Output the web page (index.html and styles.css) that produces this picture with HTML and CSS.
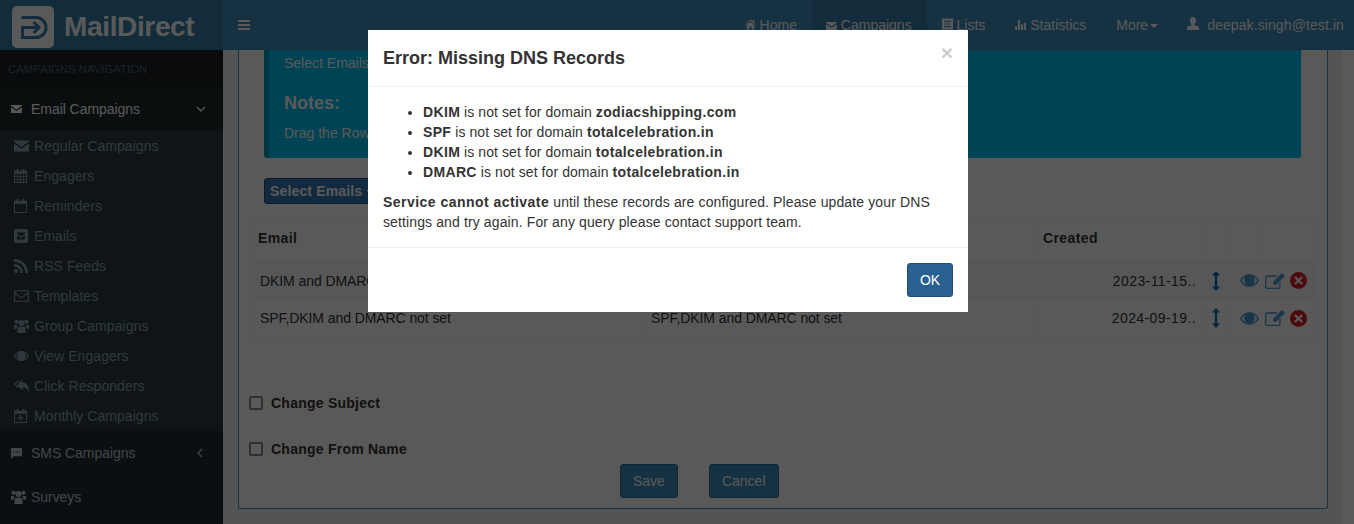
FILE: index.html
```html
<!DOCTYPE html>
<html lang="en">
<head>
  <meta charset="UTF-8">
  <title>MailDirect - Campaigns</title>
  <link rel="stylesheet" href="styles.css">
</head>
<body>

  <svg class="sprites" width="0" height="0">
    <symbol id="i-mail" viewBox="0 0 15 11" preserveAspectRatio="xMinYMid"><path d="M0 1.200V0h15v1.200L7.500 6.600zM0 3l7.500 5.300L15 3v8H0z"/></symbol>
    <symbol id="i-mail-o" viewBox="0 0 14 11" preserveAspectRatio="xMinYMid"><path fill="none" stroke="currentColor" stroke-width="1.100" d="M.6.6h12.800v9.800H.6zM.6 2.500 7 7l6.400-4.500"/></symbol>
    <symbol id="i-calendar" viewBox="0 0 14 15" preserveAspectRatio="xMinYMid"><path d="M3 0h2v2h4V0h2v2h3v13H0V2h3zM1 5v2.400h2.600V5zm3.400 0v2.400h2.200V5zm3 0v2.400h2.200V5zm3 0v2.400H13V5zM1 8.200v2.400h2.600V8.200zm3.400 0v2.400h2.200V8.200zm3 0v2.400h2.200V8.200zm3 0v2.400H13V8.200zM1 11.400V14h2.600v-2.600zm3.400 0V14h2.200v-2.600zm3 0V14h2.200v-2.600zm3 0V14H13v-2.600z" fill-rule="evenodd"/></symbol>
    <symbol id="i-calendar-o" viewBox="0 0 14 15" preserveAspectRatio="xMinYMid"><path d="M3 0h2v2h4V0h2v2h3v13H0V2h3zM1 5v9h12V5z" fill-rule="evenodd"/></symbol>
    <symbol id="i-calendar-plus" viewBox="0 0 14 15" preserveAspectRatio="xMinYMid"><path d="M3 0h2v2h4V0h2v2h3v13H0V2h3zM1 5v9h12V5zM6.400 6.500h1.200v2.400H10v1.200H7.600v2.400H6.400v-2.400H4V8.900h2.400z" fill-rule="evenodd"/></symbol>
    <symbol id="i-envelope-square" viewBox="0 0 12 12" preserveAspectRatio="xMinYMid"><path d="M2 0h8a2 2 0 0 1 2 2v8a2 2 0 0 1-2 2H2a2 2 0 0 1-2-2V2a2 2 0 0 1 2-2zm.5 3v1L6 6.300 9.500 4V3zm0 2.300V9h7V5.300L6 7.500z" fill-rule="evenodd"/></symbol>
    <symbol id="i-rss" viewBox="0 0 12 12" preserveAspectRatio="xMinYMid"><circle cx="1.700" cy="10.300" r="1.700"/><path d="M0 4.200v2.300A5.500 5.500 0 0 1 5.500 12h2.300A7.800 7.800 0 0 0 0 4.200zM0 0v2.300A9.700 9.700 0 0 1 9.700 12H12A12 12 0 0 0 0 0z"/></symbol>
    <symbol id="i-group" viewBox="0 0 15 14" preserveAspectRatio="xMinYMid"><circle cx="7.500" cy="3.900" r="3"/><circle cx="2.600" cy="2.800" r="2.100"/><circle cx="12.400" cy="2.800" r="2.100"/><path d="M4 7.800h7l.9 6.200H3.100zM0 9.800V6h3.300L2.700 9.800zM15 9.800V6h-3.300l.6 3.800z"/></symbol>
    <symbol id="i-eye" viewBox="0 0 18 12" preserveAspectRatio="xMinYMid"><path d="M9 0c4 0 7.300 2.500 9 6-1.700 3.500-5 6-9 6S1.700 9.500 0 6c1.700-3.500 5-6 9-6zM1.600 6C3.200 8.700 5.900 10.700 9 10.700s5.800-2 7.400-4.700c-.9-1.500-2.100-2.700-3.500-3.500a5 5 0 1 1-7.800 0C3.700 3.300 2.500 4.500 1.600 6z" fill-rule="evenodd"/></symbol>
    <symbol id="i-reply" viewBox="0 0 15 13" preserveAspectRatio="xMinYMid"><path d="M4.500 0v1.700L1.800 4.500l2.700 2.800V9L0 4.500zM8.500 0v3C12.500 3.300 15 6.500 15 13c-1.200-3.300-3-5-6.500-5v3.200L4 6.500 4 4.500z"/></symbol>
    <symbol id="i-comment" viewBox="0 0 12 12" preserveAspectRatio="xMinYMid"><path d="M1 0h10a1 1 0 0 1 1 1v7a1 1 0 0 1-1 1H3l-3 3V1a1 1 0 0 1 1-1zm1.500 3.800v1h1.400v-1zm2.800 0v1h1.400v-1zm2.800 0v1h1.400v-1z" fill-rule="evenodd"/></symbol>
    <symbol id="i-home" viewBox="0 0 14 13"><path d="M7 0l2.800 2.500V1h2v3.300L14 6.300l-.8.900L7 1.800.8 7.200 0 6.300zM2 7.600l5-4.400 5 4.400V13H8.500V9h-3v4H2z"/></symbol>
    <symbol id="i-list" viewBox="0 0 12 12"><path d="M0 0h12v12H0zm2 2.500v1.200h8V2.500zm0 2.900v1.200h8V5.400zm0 2.900v1.200h8V8.300z" fill-rule="evenodd"/></symbol>
    <symbol id="i-stats" viewBox="0 0 12 11"><path d="M0 7h2.300v4H0zM3.200 0h2.300v11H3.200zM6.500 5h2.300v6H6.500zM9.700 3H12v8H9.700z"/></symbol>
    <symbol id="i-user" viewBox="0 0 12 13"><path d="M6 0c1.900 0 3 1.400 3 3.400 0 1.500-.6 2.900-1.500 3.600v1.200c1.500.5 4.500 1 4.500 2.600V13H0v-2.200c0-1.600 3-2.100 4.500-2.600V7C3.600 6.300 3 4.900 3 3.400 3 1.400 4.100 0 6 0z"/></symbol>
    <symbol id="i-move" viewBox="0 0 8 20"><path d="M4 0l4 4.500H5.200v11H8L4 20l-4-4.500h2.800v-11H0z"/></symbol>
    <symbol id="i-edit" viewBox="0 0 20 16"><path fill="none" stroke="currentColor" stroke-width="1.300" d="M15 9v4.500a1.900 1.900 0 0 1-1.900 1.900H2.600A1.900 1.900 0 0 1 .7 13.500V4.900A1.900 1.900 0 0 1 2.600 3H12"/><path d="M17 0l3 3-8.800 8.800H8.200V8.800z"/></symbol>
    <symbol id="i-remove" viewBox="0 0 16 16"><path d="M8 0a8 8 0 1 1 0 16A8 8 0 0 1 8 0zM5.400 3.900 3.900 5.400 6.500 8l-2.600 2.600 1.500 1.500L8 9.500l2.600 2.600 1.500-1.500L9.500 8l2.600-2.600-1.500-1.500L8 6.500z" fill-rule="evenodd"/></symbol>
  </svg>

  <header class="topbar">
    <a class="brand">
      <svg class="brand-mark" viewBox="0 0 42 42">
        <rect width="42" height="42" rx="5" fill="#fff"/>
        <path d="M9.500 11.500H24a10 10 0 0 1 0 20H10.500V21.500H27M21.500 16l5.500 5.500-5.500 5.500" fill="none" stroke="#367fa9" stroke-width="3"/>
      </svg>
      <span class="brand-name">MailDirect</span>
    </a>
    <nav class="navbar">
      <a class="burger"><span></span><span></span><span></span></a>
      <ul class="nav-menu">
        <li><a><svg class="ico ico-home"><use href="#i-home"/></svg> Home</a></li>
        <li class="active"><a><svg class="ico ico-nav-mail"><use href="#i-mail"/></svg> Campaigns</a></li>
        <li><a><svg class="ico ico-nav-list"><use href="#i-list"/></svg> Lists</a></li>
        <li><a><svg class="ico ico-stats"><use href="#i-stats"/></svg> Statistics</a></li>
        <li><a>More<span class="caret"></span></a></li>
        <li class="nav-user"><a><svg class="ico ico-user"><use href="#i-user"/></svg> deepak.singh@test.in</a></li>
      </ul>
    </nav>
  </header>

  <div class="layout">
    <aside class="sidebar">
      <div class="side-title">CAMPAIGNS NAVIGATION</div>
      <a class="side-head open">
        <svg class="ico ico-head-mail"><use href="#i-mail"/></svg>
        <span>Email Campaigns</span>
        <svg class="chev" viewBox="0 0 10 10"><path d="M1 3l4 4 4-4"/></svg>
      </a>
      <ul class="side-sub">
        <li><svg class="ico"><use href="#i-mail"/></svg>Regular Campaigns</li>
        <li><svg class="ico"><use href="#i-calendar"/></svg>Engagers</li>
        <li><svg class="ico"><use href="#i-calendar-o"/></svg>Reminders</li>
        <li><svg class="ico"><use href="#i-envelope-square"/></svg>Emails</li>
        <li><svg class="ico"><use href="#i-rss"/></svg>RSS Feeds</li>
        <li><svg class="ico"><use href="#i-mail-o"/></svg>Templates</li>
        <li><svg class="ico"><use href="#i-group"/></svg>Group Campaigns</li>
        <li><svg class="ico"><use href="#i-eye"/></svg>View Engagers</li>
        <li><svg class="ico"><use href="#i-reply"/></svg>Click Responders</li>
        <li><svg class="ico"><use href="#i-calendar-plus"/></svg>Monthly Campaigns</li>
      </ul>
      <a class="side-head">
        <svg class="ico ico-head-sms"><use href="#i-comment"/></svg>
        <span>SMS Campaigns</span>
        <svg class="chev chev-left" viewBox="0 0 10 10"><path d="M7 1L3 5l4 4"/></svg>
      </a>
      <a class="side-head">
        <svg class="ico ico-head-group"><use href="#i-group"/></svg>
        <span>Surveys</span>
      </a>
    </aside>

    <main class="content">
      <section class="panel">
        <div class="info-box">
          <p class="info-line">Select Emails</p>
          <h3>Notes:</h3>
          <p>Drag the Row</p>
        </div>

        <button class="select-btn" type="button">Select Emails<span class="caret"></span></button>

        <table class="mail-table">
          <thead>
            <tr>
              <th class="col-email">Email</th>
              <th class="col-subject"></th>
              <th class="col-created">Created</th>
              <th class="col-move"></th>
              <th class="col-gap"></th>
              <th class="col-actions"></th>
            </tr>
          </thead>
          <tbody>
            <tr class="odd">
              <td>DKIM and DMARC not set</td>
              <td>DKIM and DMARC not set</td>
              <td class="date">2023-11-15..</td>
              <td class="move"><svg class="ico-move"><use href="#i-move"/></svg></td>
              <td colspan="2" class="actions">
                <svg class="act-eye"><use href="#i-eye"/></svg><svg class="act-edit"><use href="#i-edit"/></svg><svg class="act-del"><use href="#i-remove"/></svg>
              </td>
            </tr>
            <tr>
              <td>SPF,DKIM and DMARC not set</td>
              <td>SPF,DKIM and DMARC not set</td>
              <td class="date">2024-09-19..</td>
              <td class="move"><svg class="ico-move"><use href="#i-move"/></svg></td>
              <td colspan="2" class="actions">
                <svg class="act-eye"><use href="#i-eye"/></svg><svg class="act-edit"><use href="#i-edit"/></svg><svg class="act-del"><use href="#i-remove"/></svg>
              </td>
            </tr>
          </tbody>
        </table>

        <label class="check first"><span class="box"></span>Change Subject</label>
        <label class="check"><span class="box"></span>Change From Name</label>

        <div class="form-actions">
          <button class="btn-blue" type="button">Save</button>
          <button class="btn-blue" type="button">Cancel</button>
        </div>
      </section>
    </main>
    <div class="gutter"></div>
  </div>

  <div class="backdrop"></div>

  <div class="modal">
    <div class="modal-header">
      <h4>Error: Missing DNS Records</h4>
      <span class="close">×</span>
    </div>
    <div class="modal-body">
      <ul>
        <li><b>DKIM</b> is not set for domain <b>zodiacshipping.com</b></li>
        <li><b>SPF</b> is not set for domain <b>totalcelebration.in</b></li>
        <li><b>DKIM</b> is not set for domain <b>totalcelebration.in</b></li>
        <li><b>DMARC</b> is not set for domain <b>totalcelebration.in</b></li>
      </ul>
      <p><b>Service cannot activate</b> until these records are configured. Please update your DNS settings and try again. For any query please contact support team.</p>
    </div>
    <div class="modal-footer">
      <button class="btn-ok" type="button">OK</button>
    </div>
  </div>

</body>
</html>
```

FILE: styles.css
```css
* { box-sizing: border-box; }
html, body { height: 100%; }
body { margin: 0; height: 524px; overflow: hidden; font-family: "Liberation Sans", Arial, sans-serif; font-size: 14px; color: #333; background: #ecf0f5; }
ul { margin: 0; padding: 0; list-style: none; }
a { color: inherit; text-decoration: none; }
svg { fill: currentColor; }
.sprites { display: block; height: 0; }
.ico { flex: none; }

/* top bar */
.topbar { display: flex; height: 50px; background: #3c8dbc; color: #fff; }
.brand { display: flex; align-items: center; width: 223px; flex: none; padding-left: 12px; background: #367fa9; }
.brand-mark { width: 42px; height: 42px; margin-top: 4px; }
.brand-name { margin-left: 10px; margin-top: 4px; font-size: 28px; font-weight: bold; letter-spacing: -.35px; }
.navbar { display: flex; flex: 1; align-items: stretch; justify-content: space-between; }
.burger { display: flex; flex-direction: column; gap: 2px; justify-content: center; width: 12px; margin-left: 15px; }
.burger span { display: block; height: 2px; background: #fff; }
.nav-menu { display: flex; align-items: stretch; }
.nav-menu li { display: flex; align-items: center; padding: 0 15px; }
.nav-menu li.active { background: #367fa9; }
.nav-menu .nav-user { padding: 0 10px 0 14px; letter-spacing: .1px; }
.ico-home { width: 11px; height: 11px; }
.ico-nav-mail { width: 11px; height: 8px; margin-left: -1px; }
.ico-nav-list { width: 11px; height: 12px; }
.ico-stats { width: 11px; height: 10px; }
.ico-user { width: 12px; height: 13px; margin-right: 4px; }
.caret { display: inline-block; width: 0; height: 0; margin-left: 2px; vertical-align: middle; border-top: 4px solid #fff; border-left: 4px solid transparent; border-right: 4px solid transparent; }

/* sidebar */
.layout { display: flex; height: 474px; }
.sidebar { width: 223px; flex: none; background: #222d32; color: #b8c7ce; }
.side-title { height: 36px; padding: 13px 0 0 8px; font-size: 11.400px; color: #4b646f; background: #1a2226; }
.side-head { display: flex; align-items: center; height: 44px; padding: 0 17px 0 11px; letter-spacing: -.05px; }
.side-head span { flex: 1; margin-left: 9px; }
.side-head.open { height: 45px; background: #1e282c; color: #fff; }
.ico-head-mail { width: 11px; height: 8px; }
.ico-head-sms { width: 11px; height: 11px; }
.ico-head-group { width: 15px; height: 14px; margin-right: -4px; }
.chev { width: 10px; height: 10px; fill: none; stroke: currentColor; stroke-width: 1.300; }
.chev-left { margin-right: 1px; }
.side-sub { background: #2c3b41; color: #8aa4af; letter-spacing: .05px; }
.side-sub li { display: flex; align-items: center; height: 30px; padding-left: 14px; }
.side-sub .ico { width: 15px; height: 14px; margin-right: 5px; }

/* main panel */
.content { flex: 1; padding: 0 14px 15px 15px; background: #ecf0f5; }
.gutter { width: 13px; flex: none; background: #ffffff; }
.panel { position: relative; height: 459px; padding: 0 10px; background: #fff; border: 1px solid #3c8dbc; border-top: 0; border-radius: 0 0 3px 3px; }
.info-box { width: 1037px; height: 108px; margin-left: 15px; padding-top: 5px; background: #00c0ef; color: #fff; border-radius: 0 0 3px 3px; border-left: 5px solid #0097bc; }
.info-box p { margin: 0; padding-left: 15px; line-height: 17px; }
.info-box h3 { margin: 21px 0 12px; padding-left: 15px; font-size: 18px; line-height: 20px; font-weight: bold; }
.select-btn { display: block; width: 120px; height: 26px; margin: 20px 0 0 15px; padding: 0 0 0 5px; border: 1px solid #204d74; border-radius: 3px; background: #337ab7; color: #fff; font: bold 14px "Liberation Sans", Arial, sans-serif; letter-spacing: .15px; text-align: left; }
.select-btn .caret { margin-left: 4px; }
.mail-table { width: 1067px; margin-top: 15px; border-collapse: collapse; table-layout: fixed; }
.mail-table th, .mail-table td { border: 1px solid #f4f4f4; padding: 0 8px; }
.mail-table th { height: 42px; padding-bottom: 5px; text-align: left; font-weight: bold; color: #333; letter-spacing: .4px; }
.mail-table td { height: 37px; color: #333; padding-left: 10px; letter-spacing: -.08px; }
.mail-table tr.odd td { height: 38px; background: #f9f9f9; }
.col-email { width: 391px; }
.col-subject { width: 394px; }
.col-created { width: 168px; }
.col-move { width: 26px; }
.col-gap { width: 34px; }
.col-actions { width: 54px; }
.mail-table td.date { text-align: right; padding-right: 6px; letter-spacing: .4px; }
.mail-table td.move { padding: 0; text-align: center; color: #0073b7; }
.ico-move { display: block; width: 8px; height: 20px; margin: 0 auto; }
.mail-table td.actions { padding: 0 0 0 11px; white-space: nowrap; color: #4a9bd0; }
.actions svg { vertical-align: middle; }
.act-eye { width: 19px; height: 13px; margin-right: 6px; }
.act-edit { width: 20px; height: 16px; margin-right: 5px; }
.act-del { width: 17px; height: 17px; color: #dd1e26; }
.check { display: flex; align-items: center; height: 20px; margin-top: 26px; font-weight: bold; letter-spacing: .24px; color: #333; }
.check.first { margin-top: 56px; }
.box { width: 14px; height: 14px; margin-right: 8px; border: 2px solid #8a8a8f; border-radius: 2px; background: #fff; }
.form-actions { display: flex; gap: 31px; margin: 5px 0 0 371px; }
.btn-blue { height: 34px; padding: 0 12px; border: 1px solid #2e6da4; border-radius: 3px; background: #3c8dbc; color: #fff; font: 14px "Liberation Sans", Arial, sans-serif; }

/* dialog */
.backdrop { position: fixed; inset: 0; background: rgba(0,0,0,0.65); }
.modal { position: fixed; top: 30px; left: 368px; width: 600px; height: 282px; background: #fff; }
.modal-header { position: relative; height: 57px; padding: 15px; border-bottom: 1px solid #f0f0f0; }
.modal-header h4 { margin: 0; font-size: 18px; line-height: 26px; font-weight: bold; color: #333; }
.close { position: absolute; top: 9px; right: 15px; font-size: 21px; font-weight: bold; line-height: 27px; color: #000; opacity: .2; }
.modal-body { height: 161px; padding: 15px; border-bottom: 1px solid #f0f0f0; line-height: 20px; }
.modal-body ul { padding-left: 40px; list-style: disc; margin-bottom: 10px; letter-spacing: .08px; }
.modal-body ul b { letter-spacing: .34px; }
.modal-body p { margin: 0; letter-spacing: .12px; }
.modal-body p b { letter-spacing: .46px; }
.modal-footer { display: flex; justify-content: flex-end; padding: 15px; }
.btn-ok { width: 46px; height: 34px; border: 1px solid #204d74; border-radius: 3px; background: #286090; color: #fff; font: 14px "Liberation Sans", Arial, sans-serif; }
```
